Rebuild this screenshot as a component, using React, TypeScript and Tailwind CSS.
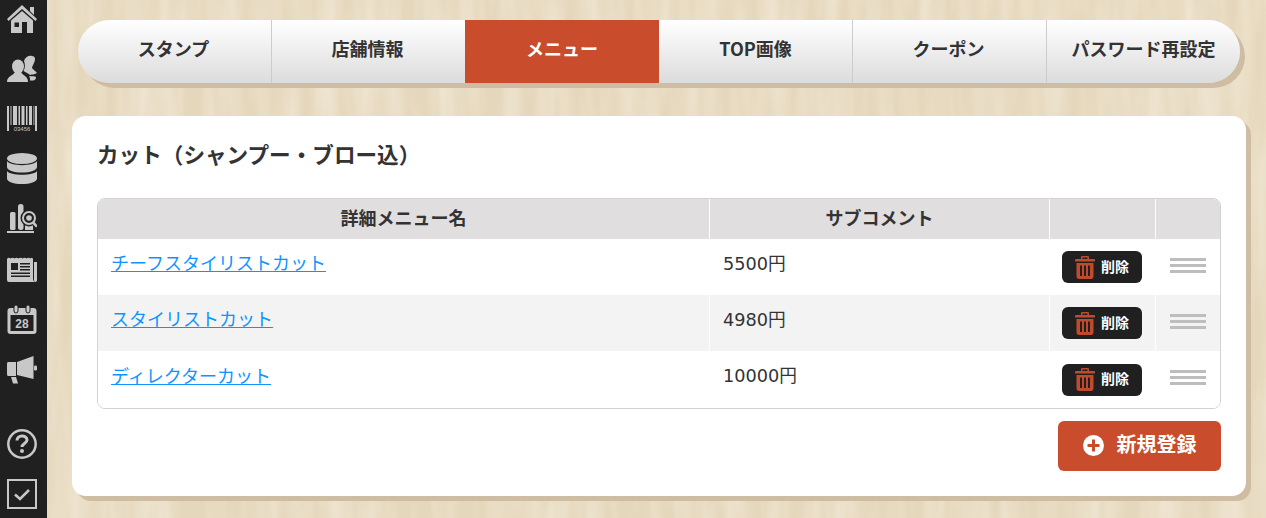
import React from "react";

const G = "#c8c8c8";
const D = "#202020";

function Home() {
  return (
    <svg width="30" height="28" viewBox="0 0 30 28" fill={G}>
      <path d="M15 0 L30 14 L28.500 16 L15 4 L1.500 16 L0 14 Z" />
      <path d="M23 2h4v8l-4-4z" />
      <path fillRule="evenodd" d="M4 15.500 L15 6 L26 15.500 V28 H20 V17 H15 V28 H4 Z M7.500 17.500 V22 H12 V17.500 Z" />
    </svg>
  );
}
function Users() {
  return (
    <svg width="30" height="27" viewBox="0 0 30 27" fill={G}>
      <ellipse cx="11" cy="11.500" rx="6" ry="7" />
      <path d="M0 27 C0 21 6 21 8 17 H14 C16 21 21 21 21 27 Z" />
      <path d="M17 6 C18 2 22 0 25 1 C28 1 29 4 27 8 C26 10 25 12 25 13 C26 15 29 16 30 18 C27 20 25 19 23 20 C21 18 18 17 16.500 16 C18.500 12 18 9 17 6 Z" />
      <path d="M22 21 C25 21.500 28 21 29 22 C29 25 27 26 23 25.500 C23 24 23 22 22 21 Z" />
    </svg>
  );
}
function Barcode() {
  return (
    <svg width="30" height="25" viewBox="0 0 30 25" fill={G}>
      <path d="M0 0h2v25H0zM3.500 0h1v19h-1zM6 0h4v19H6zM11.500 0h1.500v19h-1.500zM14.500 0h3v19h-3zM19 0h1.500v19H19zM22 0h3v19h-3zM26.500 0h.8v19h-.8zM28 0h2v25h-2z" />
      <text x="15" y="24.500" textAnchor="middle" fontSize="6" fontFamily="'Liberation Sans', sans-serif" fill={G}>03456</text>
    </svg>
  );
}
function Database() {
  return (
    <svg width="30" height="31" viewBox="0 0 30 31" fill={G}>
      <ellipse cx="15" cy="5.500" rx="15" ry="5.500" />
      <path d="M0 8 C3 13.500 27 13.500 30 8 V14 C30 17.500 23 19.500 15 19.500 C7 19.500 0 17.500 0 14 Z" />
      <path d="M0 18 C3 23 27 23 30 18 V25.500 C30 29 23 31 15 31 C7 31 0 29 0 25.500 Z" />
    </svg>
  );
}
function Analytics() {
  return (
    <svg width="30" height="30" viewBox="0 0 30 30" fill={G}>
      <rect x="3" y="9" width="5.500" height="18" rx="1.500" />
      <rect x="11" y="1" width="5.500" height="26" rx="2.500" />
      <rect x="18" y="19" width="8" height="8" />
      <rect x="0" y="28" width="27" height="2" />
      <circle cx="22" cy="15" r="8.500" fill={D} />
      <circle cx="22" cy="15" r="6" fill="none" stroke={G} strokeWidth="2" />
      <circle cx="22" cy="15" r="2.800" />
      <path d="M26 19.500 L30 23.500" stroke={G} strokeWidth="2.500" />
    </svg>
  );
}
function News() {
  return (
    <svg width="30" height="25" viewBox="0 0 30 25" fill={G}>
      <path fillRule="evenodd" d="M0 2 Q1.500 0 3.500 1.500 Q5.500 0 7.500 1.500 Q9.500 0 11.500 1.500 Q13.500 0 15.500 1.500 Q17.500 0 19.500 1.500 Q21.500 0 23.500 1.500 Q25 0 26 2 V22 Q26 24 28 25 H2 Q0 25 0 23 Z M4 6 V13 H11 V6 Z M13 6 V7.500 H23 V6 Z M13 9 V10.500 H23 V9 Z M13 12 V13.500 H23 V12 Z M4 15.500 V17 H23 V15.500 Z M4 18.500 V20 H23 V18.500 Z" />
      <path d="M27 5h3v18q0 2-1.500 2q-1.500 0-1.500-2z" />
    </svg>
  );
}
function Calendar() {
  return (
    <svg width="30" height="29" viewBox="0 0 30 29" fill={G}>
      <rect x="0.500" y="3" width="29" height="26" rx="3" />
      <rect x="3.500" y="10" width="23" height="16" fill={D} />
      <rect x="7" y="0" width="4" height="8" rx="2" stroke={D} strokeWidth="1" />
      <rect x="19" y="0" width="4" height="8" rx="2" stroke={D} strokeWidth="1" />
      <text x="15" y="23" textAnchor="middle" fontSize="12" fontWeight="700" fontFamily="'Liberation Sans', sans-serif" fill={G}>28</text>
    </svg>
  );
}
function Megaphone() {
  return (
    <svg width="30" height="29" viewBox="0 0 30 29" fill={G}>
      <path d="M1 7 H9 V21 H1 Q0 21 0 19 V9 Q0 7 1 7 Z" />
      <path d="M10 7 L26.500 1 V24 L10 20 Z" />
      <rect x="27" y="10.500" width="3" height="5" rx="1.200" />
      <path d="M4 22 H9 L11 28.500 H6 Z" />
    </svg>
  );
}
function Help() {
  return (
    <svg width="30" height="30" viewBox="0 0 30 30">
      <circle cx="15" cy="15" r="13.700" fill="none" stroke={G} strokeWidth="2.500" />
      <path d="M10 11.500 C10 5.500 20 5.500 20 11 C20 14.500 15 14.500 15 18" fill="none" stroke={G} strokeWidth="3" />
      <circle cx="15" cy="22" r="2" fill={G} />
    </svg>
  );
}
function Check() {
  return (
    <svg width="30" height="30" viewBox="0 0 30 30">
      <rect x="1" y="1" width="28" height="28" fill="none" stroke={G} strokeWidth="2" />
      <path d="M8 15.500 L13 20 L22 11" fill="none" stroke={G} strokeWidth="2.500" />
    </svg>
  );
}
function Trash() {
  return (
    <svg width="20" height="23" viewBox="0 0 20 23" fill="#bf4a2c">
      <path fillRule="evenodd" d="M7 0 H13 Q14 0 14 1 V3 H19 Q20 3 20 4 V5.500 H0 V4 Q0 3 1 3 H6 V1 Q6 0 7 0 Z M7.500 1.500 V3 H12.500 V1.500 Z" />
      <path fillRule="evenodd" d="M1.500 7 H18.500 V20 Q18.500 23 16 23 H4 Q1.500 23 1.500 20 Z M5 9.500 V20 H7 V9.500 Z M9 9.500 V20 H11 V9.500 Z M13 9.500 V20 H15 V9.500 Z" />
    </svg>
  );
}
function Plus() {
  return (
    <svg width="21" height="21" viewBox="0 0 21 21">
      <circle cx="10.500" cy="10.500" r="10.500" fill="#fff" />
      <path d="M4.500 9h12v3h-12zM9 4.500h3v12H9z" fill="#c94c2c" />
    </svg>
  );
}
function Grip() {
  return (
    <div className="flex w-9 flex-col gap-[3px]">
      <div className="h-[3px] bg-[#bdbdbd]" />
      <div className="h-[3px] bg-[#bdbdbd]" />
      <div className="h-[3px] bg-[#bdbdbd]" />
    </div>
  );
}
function Wood() {
  return (
    <svg className="pointer-events-none absolute inset-0" width="1266" height="518" aria-hidden="true">
      <filter id="grain" x="0" y="0" width="100%" height="100%">
        <feTurbulence type="fractalNoise" baseFrequency="0.05 0.007" numOctaves="3" seed="7" />
        <feColorMatrix values="0 0 0 0 1  0 0 0 0 0.97  0 0 0 0 0.9  0.7 0 0 0 -0.22" />
      </filter>
      <rect width="1266" height="518" filter="url(#grain)" />
    </svg>
  );
}

const tabs = [
  ["スタンプ", "flex w-[193px] items-center justify-center pb-[6px] pr-[2px] text-[18px] font-bold"],
  ["店舗情報", "flex w-[194px] items-center justify-center border-l border-[#cccccc] pb-[6px] pr-[2px] text-[18px] font-bold"],
  ["メニュー", "flex w-[194px] items-center justify-center bg-[#c94c2c] pb-[6px] text-[18px] font-bold text-white"],
  ["TOP画像", "flex w-[193px] items-center justify-center pb-[6px] text-[18px] font-bold"],
  ["クーポン", "flex w-[194px] items-center justify-center border-l border-[#cccccc] pb-[6px] pr-[2px] text-[18px] font-bold"],
  ["パスワード再設定", "flex w-[194px] items-center justify-center border-l border-[#cccccc] pb-[6px] text-[18px] font-bold"],
];
const rows = [
  ["チーフスタイリストカット", "5500円", "h-14 bg-white"],
  ["スタイリストカット", "4980円", "h-14 bg-[#f3f3f3]"],
  ["ディレクターカット", "10000円", "h-[57px] bg-white"],
];

export default function App() {
  return (
    <div className="relative flex h-[518px] w-[1266px] overflow-hidden bg-[#e5d7bc] font-['Noto_Sans_CJK_JP','Noto_Sans',sans-serif] text-[#333333]">
      <Wood />
      <aside className="relative flex w-[47px] shrink-0 flex-col items-start bg-[#202020] pl-[7px] pt-[5px]">
        <Home />
        <div className="mt-[22px] flex"><Users /></div>
        <div className="mt-[24px] flex"><Barcode /></div>
        <div className="mt-[22px] flex"><Database /></div>
        <div className="mt-[19px] flex"><Analytics /></div>
        <div className="mt-[24px] flex"><News /></div>
        <div className="mt-[23px] flex"><Calendar /></div>
        <div className="mt-[21px] flex"><Megaphone /></div>
        <div className="mt-auto flex"><Help /></div>
        <div className="mb-[9px] mt-[20px] flex"><Check /></div>
      </aside>

      <main className="relative flex min-w-0 flex-1 flex-col pl-[25px] pr-[20px] pt-[20px]">
        <nav className="mx-[6px] flex h-[63px] overflow-hidden rounded-[32px] bg-[linear-gradient(#ffffff,#dcdcdc)] shadow-[5px_5px_0_#cfbda3]">
          {tabs.map(([t, cls]) => (
            <div key={t} className={cls}>{t}</div>
          ))}
        </nav>

        <section className="mt-[33px] h-[380px] rounded-[14px] bg-white px-[25px] shadow-[5px_5px_0_#cfbda3]">
          <h2 className="mt-[22px] h-[60px] text-[21.6px] font-bold leading-[31px]">カット（シャンプー・ブロー込）</h2>
          <div className="overflow-hidden rounded-[8px] border border-[#d2d2d2]">
            <div className="flex h-[40px] bg-[#e0dedf] text-[18px] font-bold">
              <div className="flex w-[611px] items-center justify-center pb-[3px]">詳細メニュー名</div>
              <div className="flex w-[341px] items-center justify-center border-x border-white pb-[3px]">サブコメント</div>
              <div className="w-[105px]" />
              <div className="flex-1 border-l border-white" />
            </div>
            {rows.map(([name, price, cls]) => (
              <div key={name} className={"flex items-center " + cls}>
                <div className="flex h-full w-[611px] items-center pb-[9px] pl-[13px]">
                  <a href="#" className="text-[18px] text-[#0f94ff] underline">{name}</a>
                </div>
                <div className="flex h-full w-[341px] items-center border-x border-white pb-[6px] pl-[13px] font-['DejaVu_Sans','Noto_Sans_CJK_JP',sans-serif] text-[17.700px]">{price}</div>
                <div className="flex h-full w-[105px] items-center justify-center pr-[1px]">
                  <button className="flex h-[32px] w-[80px] items-center justify-center gap-[6px] rounded-[6px] bg-[#202020] text-[14px] font-bold text-white">
                    <Trash />
                    <span className="pb-[2px]">削除</span>
                  </button>
                </div>
                <div className="flex h-full flex-1 items-center justify-center border-l border-white pb-[4px]"><Grip /></div>
              </div>
            ))}
          </div>
          <div className="mt-[12px] flex justify-end">
            <button className="flex h-[50px] w-[163px] items-center justify-center gap-[13px] rounded-[6px] bg-[#c94c2c] pb-[2px] text-[20px] font-bold text-white">
              <Plus />
              <span className="pb-[2px]">新規登録</span>
            </button>
          </div>
        </section>
      </main>
    </div>
  );
}
